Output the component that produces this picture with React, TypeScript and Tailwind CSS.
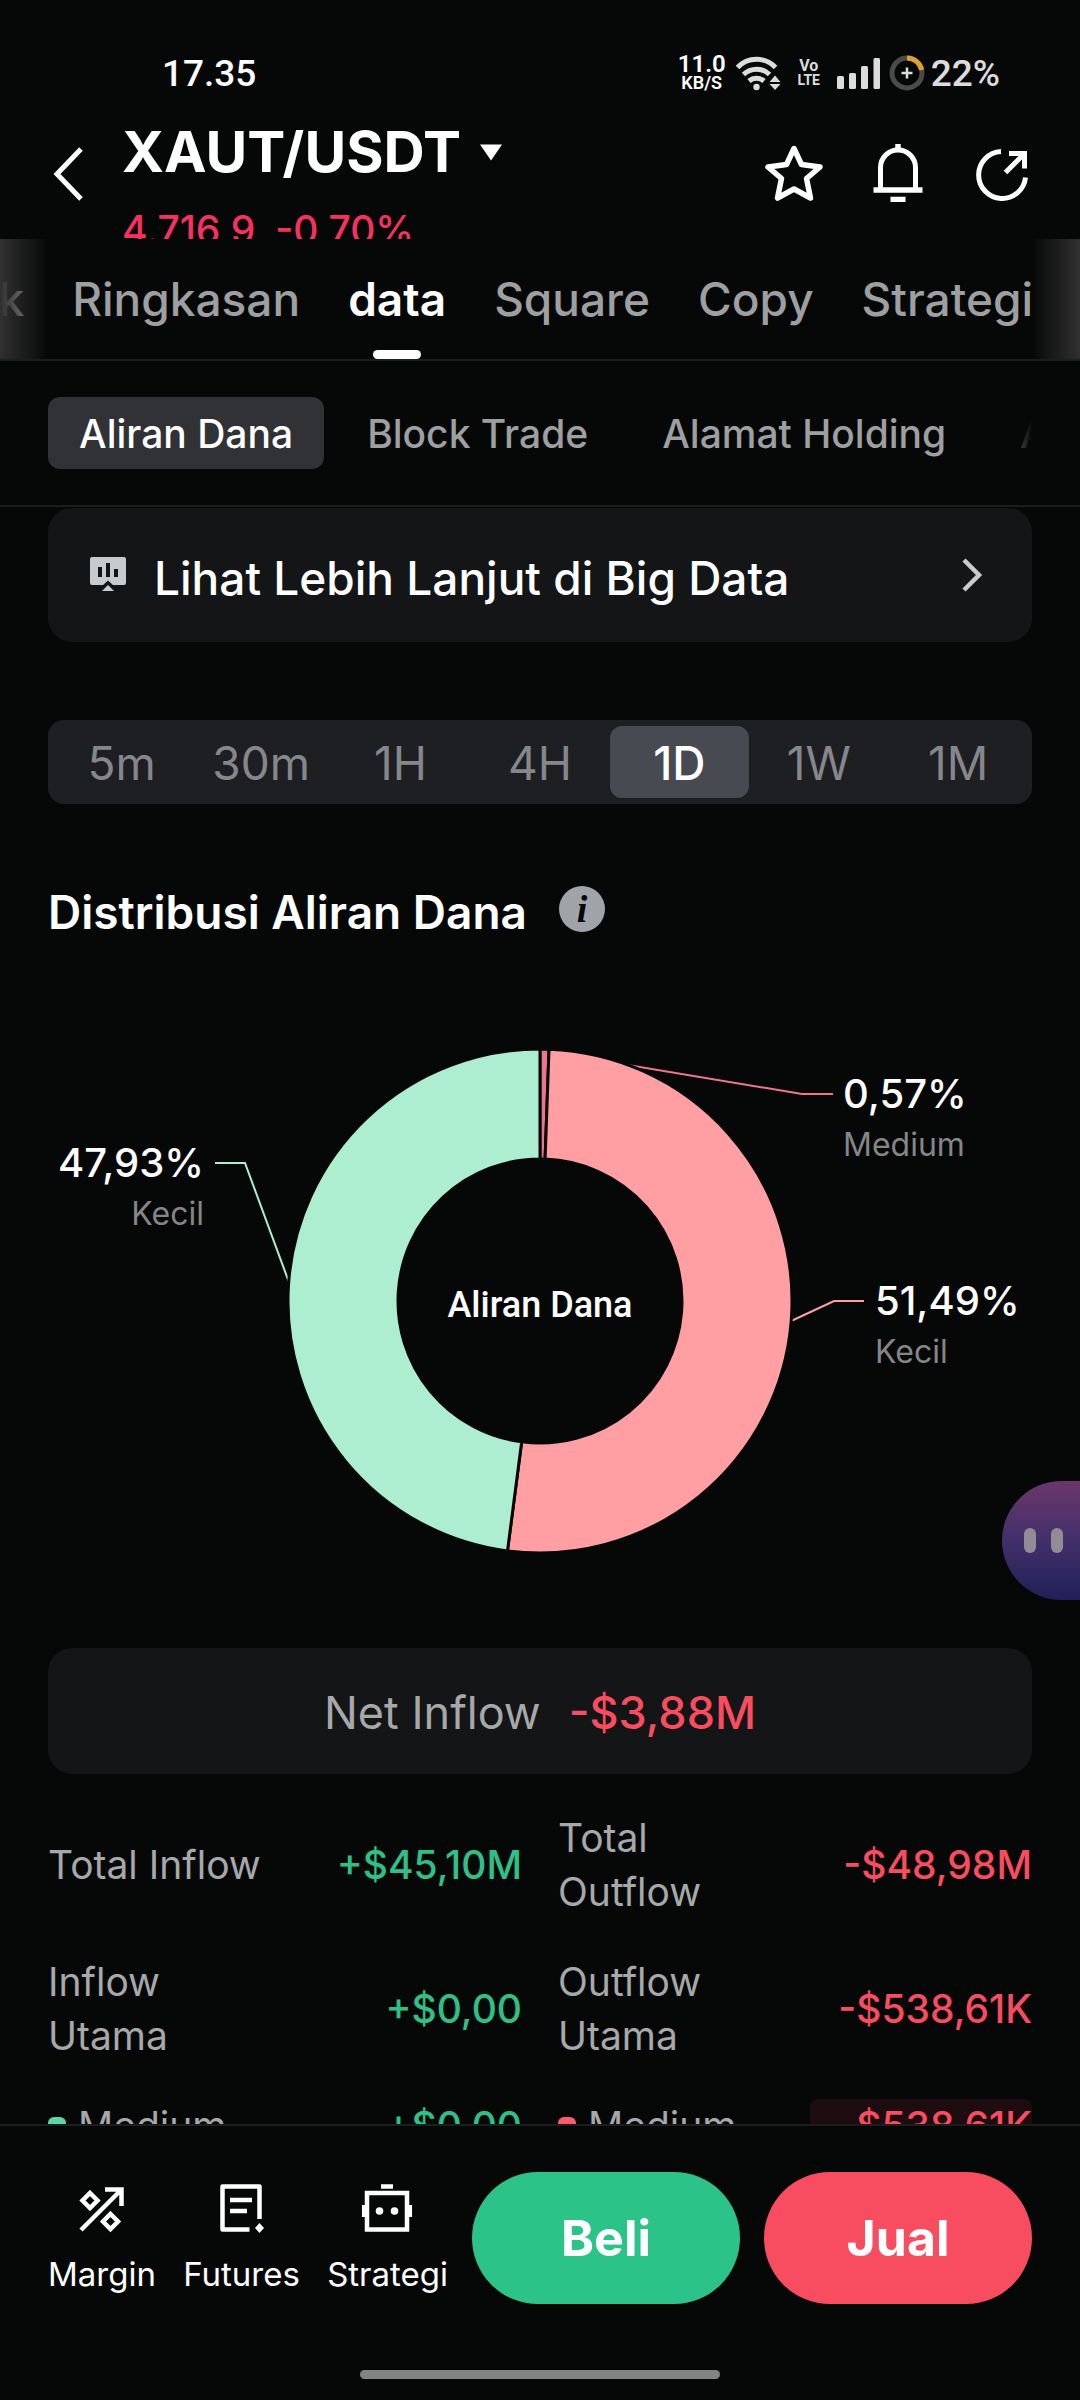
import { useState, type ReactNode } from "react";

const tabs = ["Grafik", "Ringkasan", "data", "Square", "Copy", "Strategi"];
const subTabs = ["Aliran Dana", "Block Trade", "Alamat Holding", "Analisis"];
const ranges = ["5m", "30m", "1H", "4H", "1D", "1W", "1M"];

const BG = "#060807";

const CENTER = { x: 540, y: 289 };
const OUTER = 252;
const INNER = 142;

const slices = [
  { name: "Medium", share: 0.0057, color: "#f0758a" },
  { name: "Kecil keluar", share: 0.5149, color: "#ff9fa4" },
  { name: "Kecil masuk", share: 0.4794, color: "#aeeed0" },
];

function point(share: number, radius: number) {
  const angle = share * Math.PI * 2;
  return `${CENTER.x + radius * Math.sin(angle)} ${CENTER.y - radius * Math.cos(angle)}`;
}

function slicePath(from: number, to: number) {
  const large = to - from > 0.5 ? 1 : 0;
  return `M${point(from, OUTER)} A${OUTER} ${OUTER} 0 ${large} 1 ${point(to, OUTER)} L${point(to, INNER)} A${INNER} ${INNER} 0 ${large} 0 ${point(from, INNER)} Z`;
}

function StatusBar() {
  return (
    <div className="flex h-[130px] shrink-0 items-center justify-between pb-4 pl-[162px] pr-20 pt-8 font-[Roboto]">
      <span className="text-[37px] font-medium leading-none">17.35</span>
      <div className="flex items-center text-[#dcdcdc]">
        <span className="flex w-[42px] flex-col items-center font-semibold text-white">
          <span className="text-[24px] leading-[20px]">11.0</span>
          <span className="text-[18px] leading-[18px]">KB/S</span>
        </span>
        <svg width="46" height="36" viewBox="0 0 46 36" fill="none" className="ml-3" aria-hidden="true">
          <g stroke="currentColor" strokeWidth="5">
            <path d="M2.5 12.5A26 26 0 0 1 40.5 12.5" />
            <path d="M8.5 19.5A18.5 18.5 0 0 1 34.5 19.5" />
            <path d="M14 26A11.5 11.5 0 0 1 29 26" />
          </g>
          <circle cx="21.5" cy="32" r="3.2" fill="currentColor" />
          <path d="M40 20.5L45.5 27H34.5Z M40 35L45.5 29H34.5Z" fill="currentColor" />
        </svg>
        <span
          className="ml-4 flex w-6 flex-col items-center font-['Liberation_Sans_Narrow',Roboto] font-bold"
          aria-label="VoLTE"
        >
          <span className="text-[16px] leading-[15px]">Vo</span>
          <span className="text-[14px] leading-[15px]">LTE</span>
        </span>
        <svg width="44" height="31" viewBox="0 0 44 31" fill="currentColor" className="ml-4" aria-hidden="true">
          <rect x="0" y="18" width="7" height="13" rx="1.5" />
          <rect x="12" y="15" width="7" height="16" rx="1.5" />
          <rect x="24" y="8" width="7" height="23" rx="1.5" />
          <rect x="36.5" y="0" width="6.5" height="31" rx="1.5" />
        </svg>
        <svg width="36" height="36" viewBox="0 0 36 36" fill="none" className="ml-2" aria-hidden="true">
          <circle cx="18" cy="18" r="15" stroke="#4a4b4a" strokeWidth="5" />
          <path d="M18 3A15 15 0 0 1 32.7 15" stroke="#e0a030" strokeWidth="5" />
          <path d="M18 12.5V23.5M12.5 18H23.5" stroke="currentColor" strokeWidth="2.5" />
        </svg>
        <span className="ml-1.5 text-[37px] font-medium leading-none">22%</span>
      </div>
    </div>
  );
}

function Header() {
  return (
    <header className="flex h-[109px] shrink-0 items-start overflow-hidden px-12">
      <button type="button" aria-label="Kembali" className="mt-4 w-[74px]">
        <svg width="40" height="56" viewBox="0 0 40 56" fill="none" aria-hidden="true">
          <path d="M33 3L9 28L33 53" stroke="white" strokeWidth="5" />
        </svg>
      </button>
      <div className="-mt-3.5 flex-1">
        <button type="button" className="flex items-center gap-[18px]">
          <h1 className="text-[57px] font-bold leading-[72px]">XAUT/USDT</h1>
          <svg width="24" height="17" viewBox="0 0 24 17" aria-hidden="true">
            <path d="M1 0.5H23L12 16.5Z" fill="white" />
          </svg>
        </button>
        <p className="mt-3.5 flex gap-5 text-[39px] font-medium leading-[56px] text-[#f5315f]">
          <span>4.716,9</span>
          <span>-0,70%</span>
        </p>
      </div>
      <div className="mt-3 flex gap-[44px]">
        <button type="button" aria-label="Favorit">
          <svg width="60" height="60" viewBox="0 0 60 60" fill="none" aria-hidden="true">
            <path
              d="M30 6.5L37.5 22.5L56 25L42.5 36.5L46.5 56L30 47L13.5 56L17.5 36.5L4 25L22.5 22.5Z"
              stroke="white"
              strokeWidth="5.5"
              strokeLinejoin="round"
            />
          </svg>
        </button>
        <button type="button" aria-label="Notifikasi">
          <svg width="60" height="60" viewBox="0 0 60 60" fill="none" aria-hidden="true">
            <path d="M12.5 46V25.5A17.5 17.5 0 0 1 47.5 25.5V46" stroke="white" strokeWidth="5" />
            <path d="M30 2V9M5.5 48H54.5M22.5 57.5H37.5" stroke="white" strokeWidth="5.5" />
          </svg>
        </button>
        <button type="button" aria-label="Bagikan">
          <svg width="60" height="60" viewBox="0 0 60 60" fill="none" aria-hidden="true">
            <path d="M29 9.5A23.5 23.5 0 1 0 53.5 35.5" stroke="white" strokeWidth="5" />
            <path d="M37 11.5H52.5V26.5M52 12L33.5 30.5" stroke="white" strokeWidth="5" />
          </svg>
        </button>
      </div>
    </header>
  );
}

function MainTabs() {
  const [active, setActive] = useState("data");

  return (
    <nav className="relative flex h-[122px] shrink-0 justify-end gap-12 overflow-hidden border-b-2 border-[#1c1e1d] pr-[47px]">
      {tabs.map((tab) => (
        <button
          key={tab}
          type="button"
          onClick={() => setActive(tab)}
          className={`relative shrink-0 text-[46px] ${
            active === tab ? "font-semibold text-white" : "font-medium text-[#9d9fa1]"
          }`}
        >
          {tab}
          {active === tab && (
            <span className="absolute bottom-0 left-1/2 h-[9px] w-12 -translate-x-1/2 rounded-full bg-white" />
          )}
        </button>
      ))}
      <div className="absolute inset-y-0 left-0 w-12 bg-linear-to-r from-[#303030] to-transparent" />
      <div className="absolute inset-y-0 right-0 w-12 bg-linear-to-l from-[#303030] to-transparent" />
    </nav>
  );
}

function SubTabs() {
  const [active, setActive] = useState(subTabs[0]);

  return (
    <nav className="relative flex h-[146px] shrink-0 items-center gap-3 overflow-hidden border-b-2 border-[#1c1e1d] pl-12">
      {subTabs.map((tab) => (
        <button
          key={tab}
          type="button"
          onClick={() => setActive(tab)}
          className={`h-[72px] shrink-0 rounded-xl px-[31px] pt-0.5 text-[39px] font-medium ${
            active === tab ? "bg-[#313236] text-white" : "text-[#9d9fa1]"
          }`}
        >
          {tab}
        </button>
      ))}
      <div className="absolute inset-y-0 right-0 w-20 bg-linear-to-r from-transparent to-[#060807] to-40%" />
    </nav>
  );
}

function BigDataLink() {
  return (
    <a href="#big-data" className="flex h-[134px] items-center rounded-3xl bg-[#141516] pl-[42px] pr-12">
      <svg width="36" height="36" viewBox="0 0 36 36" aria-hidden="true">
        <path
          d="M2 0H34A2 2 0 0 1 36 2V26A2 2 0 0 1 34 28H23L18 23.5L13 28H2A2 2 0 0 1 0 26V2A2 2 0 0 1 2 0Z"
          fill="#c8cbce"
        />
        <path d="M18 28L24 34H12Z" fill="#c8cbce" />
        <path d="M10 10V20M18 6V20M26 12V20" stroke="#141516" strokeWidth="4" />
      </svg>
      <span className="ml-7 flex-1 pt-1.5 text-[46px] font-medium leading-none">Lihat Lebih Lanjut di Big Data</span>
      <svg width="24" height="36" viewBox="0 0 24 36" fill="none" aria-hidden="true">
        <path d="M4 3L19 18L4 33" stroke="#c8cbce" strokeWidth="4.5" />
      </svg>
    </a>
  );
}

function RangePicker() {
  const [range, setRange] = useState("1D");

  return (
    <div className="mt-[78px] flex h-[84px] rounded-2xl bg-[#1e1f23] px-1 py-1.5">
      {ranges.map((item) => (
        <button
          key={item}
          type="button"
          onClick={() => setRange(item)}
          className={`flex-1 rounded-xl pt-0.5 text-[46px] leading-none ${
            range === item ? "bg-[#484a52] font-medium text-white" : "text-[#85878b]"
          }`}
        >
          {item}
        </button>
      ))}
    </div>
  );
}

function FlowChart() {
  let start = 0;

  return (
    <svg viewBox="0 0 1080 600" className="mt-[76px] block h-auto w-full" role="img" aria-label="Distribusi aliran dana">
      <g fill="none" strokeWidth="2">
        <path d="M544 39L802 82H833" stroke="#f0758a" />
        <path d="M789 310L834 289H864" stroke="#ff9fa4" />
        <path d="M290 273L245 151H215" stroke="#aeeed0" />
      </g>
      {slices.map((slice) => {
        const from = start;
        start += slice.share;
        return (
          <path
            key={slice.name}
            d={slicePath(from, start)}
            fill={slice.color}
            stroke={BG}
            strokeWidth="3"
          />
        );
      })}
      <text x="540" y="305" textAnchor="middle" fill="white" className="font-[Roboto] text-[36px] font-medium">
        Aliran Dana
      </text>
      <g fill="white" className="text-[40px] font-medium">
        <text x="204" y="165" textAnchor="end">47,93%</text>
        <text x="843" y="96">0,57%</text>
        <text x="875" y="303">51,49%</text>
      </g>
      <g fill="#858687" className="text-[32px]">
        <text x="204" y="213" textAnchor="end">Kecil</text>
        <text x="843" y="144">Medium</text>
        <text x="875" y="351">Kecil</text>
      </g>
    </svg>
  );
}

type FlowProps = {
  label: string;
  value: string;
  down?: boolean;
  dot?: boolean;
  highlight?: boolean;
};

function Flow({ label, value, down, dot, highlight }: FlowProps) {
  return (
    <div className="flex min-h-[54px] items-center text-[39px] leading-[54px]">
      <dt className="flex flex-1 items-center gap-3 pr-6 text-[#a6a8aa]">
        {dot && <span className={`size-[18px] shrink-0 rounded-md ${down ? "bg-[#fb5b70]" : "bg-[#5ed6a3]"}`} />}
        {label}
      </dt>
      <dd
        className={`w-[222px] shrink-0 text-right font-medium ${down ? "text-[#f84c5f]" : "text-[#2fc088]"} ${
          highlight ? "rounded-lg bg-[#1d0c10]" : ""
        }`}
      >
        {value}
      </dd>
    </div>
  );
}

function Shortcut({ label, children }: { label: string; children: ReactNode }) {
  return (
    <button type="button" className="flex flex-col items-center gap-[18px]">
      <svg width="54" height="54" viewBox="0 0 54 54" fill="none" stroke="white" strokeWidth="4.5" aria-hidden="true">
        {children}
      </svg>
      <span className="text-[33px] leading-[40px]">{label}</span>
    </button>
  );
}

function BottomBar() {
  return (
    <footer className="h-[276px] shrink-0 border-t-2 border-[#1c1e1d]">
      <div className="flex items-center gap-6 px-12 pt-[46px]">
        <div className="flex flex-1 justify-between">
          <Shortcut label="Margin">
            <path d="M30 7.5H46.5V24M46 8L6 48" />
            <path d="M15 11L22.5 18.5L15 26L7.5 18.5Z M35.5 32L43 39.5L35.5 47L28 39.5Z" />
          </Shortcut>
          <Shortcut label="Futures">
            <path d="M44.5 37V4.5H7.5V47.5H34.5" strokeLinejoin="round" />
            <path d="M15 18H37M15 29H32" />
            <path d="M44.5 41L49 46L44.5 51L40 46Z" fill="white" stroke="none" />
          </Shortcut>
          <Shortcut label="Strategi">
            <rect x="6" y="11" width="40" height="36.5" />
            <path d="M20 4.5H32" />
            <path d="M3.2 23V35M48.8 23V35" />
            <circle cx="18.5" cy="29" r="3.8" fill="white" stroke="none" />
            <circle cx="33.5" cy="29" r="3.8" fill="white" stroke="none" />
          </Shortcut>
        </div>
        <div className="flex gap-6 text-[50px] font-bold">
          <button type="button" className="h-[132px] w-[268px] rounded-full bg-[#2bc387]">
            Beli
          </button>
          <button type="button" className="h-[132px] w-[268px] rounded-full bg-[#f84c60]">
            Jual
          </button>
        </div>
      </div>
      <div className="mx-auto mt-[66px] h-[9px] w-1/3 rounded-full bg-[#828483]" />
    </footer>
  );
}

export default function App() {
  return (
    <div className="relative flex h-screen flex-col overflow-hidden bg-[#060807] font-[Inter,'Liberation_Sans',sans-serif] text-white">
      <StatusBar />
      <Header />
      <MainTabs />
      <SubTabs />

      <main className="min-h-0 flex-1 overflow-hidden pt-px">
        <section className="px-12">
          <BigDataLink />
          <RangePicker />
          <div className="mt-[78px] flex items-center gap-8">
            <h2 className="pt-1.5 text-[46px] font-semibold leading-[48px]">Distribusi Aliran Dana</h2>
            <button
              type="button"
              aria-label="Info"
              className="size-[46px] rounded-full bg-[#a0a3a8] font-['Liberation_Serif',serif] text-[38px] font-bold italic leading-[46px] text-[#060807]"
            >
              i
            </button>
          </div>
        </section>

        <FlowChart />

        <section className="px-12">
          <div className="mt-9 flex h-[126px] items-center justify-center gap-7 rounded-3xl bg-[#141517] pt-1 text-[45px]">
            <span className="text-[#a6a8aa]">Net Inflow</span>
            <span className="font-medium text-[#f84c5f]">-$3,88M</span>
          </div>
          <dl className="mt-[37px] grid grid-cols-2 items-center gap-9">
            <Flow label="Total Inflow" value="+$45,10M" />
            <Flow label="Total Outflow" value="-$48,98M" down />
            <Flow label="Inflow Utama" value="+$0,00" />
            <Flow label="Outflow Utama" value="-$538,61K" down />
            <Flow label="Medium" value="+$0,00" dot />
            <Flow label="Medium" value="-$538,61K" down dot highlight />
          </dl>
        </section>
      </main>

      <BottomBar />

      <button
        type="button"
        aria-label="Asisten"
        className="absolute right-0 top-[1481px] flex h-[119px] w-[78px] items-center gap-[15px] rounded-l-full bg-linear-to-b from-[#6b366b] via-[#42306a] to-[#221f57] pl-[22px]"
      >
        <span className="h-[25px] w-3 rounded-full bg-[#928d95]" />
        <span className="h-[25px] w-3 rounded-full bg-[#928d95]" />
      </button>
    </div>
  );
}
